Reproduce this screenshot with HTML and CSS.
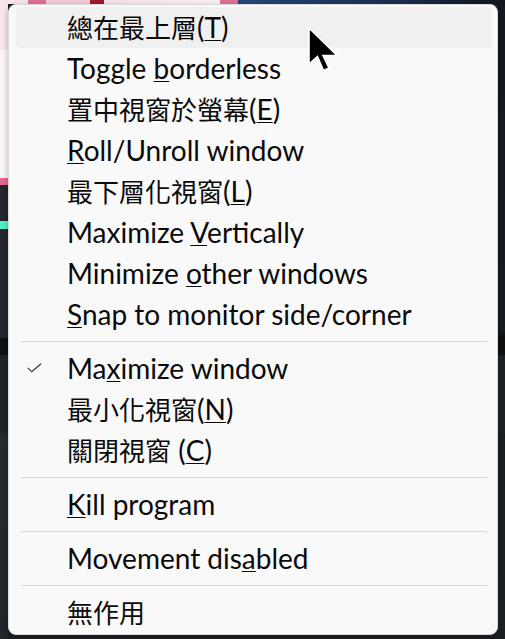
FILE: index.html
```html
<!DOCTYPE html>
<html lang="zh-Hant">
<head>
<meta charset="utf-8">
<title>Window menu</title>
<link rel="stylesheet" href="styles.css">
</head>
<body>
<div class="menu">
  <div class="item hover"><span class="label"><span class="cjk">總在最上層</span>(<u>T</u>)</span></div>
  <div class="item"><span class="label">Toggle <u>b</u>orderless</span></div>
  <div class="item"><span class="label"><span class="cjk">置中視窗於螢幕</span>(<u>E</u>)</span></div>
  <div class="item"><span class="label"><u>R</u>oll/Unroll window</span></div>
  <div class="item"><span class="label"><span class="cjk">最下層化視窗</span>(<u>L</u>)</span></div>
  <div class="item"><span class="label">Maximize <u>V</u>ertically</span></div>
  <div class="item"><span class="label">Minimize <u>o</u>ther windows</span></div>
  <div class="item"><span class="label"><u>S</u>nap to monitor side/corner</span></div>
  <div class="sep"></div>
  <div class="item">
    <svg class="check" width="15" height="10" viewBox="0 0 15 10"><polyline points="0.8,4.8 4.8,8.8 14,0.8" fill="none" stroke="#333" stroke-width="1.2"/></svg>
    <span class="label">Ma<u>x</u>imize window</span>
  </div>
  <div class="item"><span class="label"><span class="cjk">最小化視窗</span>(<u>N</u>)</span></div>
  <div class="item"><span class="label"><span class="cjk">關閉視窗</span> (<u>C</u>)</span></div>
  <div class="sep"></div>
  <div class="item"><span class="label"><u>K</u>ill program</span></div>
  <div class="sep"></div>
  <div class="item"><span class="label">Movement dis<u>a</u>bled</span></div>
  <div class="sep"></div>
  <div class="item"><span class="label"><span class="cjk">無作用</span></span></div>
</div>
<svg class="cursor" width="32" height="46" viewBox="0 0 32 46">
  <polygon points="1,1 1,37 9.5,29.5 15.5,43.5 21,41 15,28.5 29,28.5" fill="#000" stroke="#fff" stroke-width="1.6" stroke-linejoin="miter"/>
</svg>
</body>
</html>
```

FILE: styles.css
```css
html, body {
  margin: 0;
  padding: 0;
}
body {
  width: 505px;
  height: 639px;
  overflow: hidden;
  position: relative;
  font-family: Lato, "Noto Sans CJK TC", sans-serif;
  background:
    linear-gradient(to right,
      #f7e6ec 0, #f7e6ec 28px,
      #e07094 28px, #e07094 46px,
      #f3cbd8 46px, #f3cbd8 90px,
      #9b1b33 90px, #9b1b33 104px,
      #fae2ea 104px, #fdf2f5 220px,
      #e07094 220px, #e07094 238px,
      #27477a 238px, #1a2d4c 400px, #0f161e 505px) top left / 100% 4px no-repeat,
    linear-gradient(to bottom,
      #f8e6ec 0, #f8e6ec 50px,
      #fcf6f7 50px, #fcf6f7 178px,
      #e06a90 178px, #e06a90 185px,
      #22272d 185px, #22272d 221px,
      #4ef0c4 221px, #4ef0c4 229px,
      #22272d 229px, #22272d 338px,
      #0e1113 338px, #0e1113 355px,
      #1f2328 355px, #1f2328 433px,
      #272b30 433px, #22262b 639px) top left / 8px 100% no-repeat,
    linear-gradient(to bottom,
      #121922 0, #161c22 330px,
      #0e1113 337px, #0e1113 355px,
      #1e2328 355px, #1e2328 433px,
      #1a1f23 433px, #1b2226 639px) top right / 8px 100% no-repeat,
    #1c2024;
}
.menu {
  box-sizing: border-box;
  margin: 4px 0 0 8px;
  width: 490px;
  height: 631px;
  padding: 2px 5px 1px 7px;
  background: #f9f9f9;
  border: 1px solid #d9d9d9;
  border-radius: 8px;
  box-shadow: 0 2px 6px rgba(0, 0, 0, 0.28);
  display: flex;
  flex-direction: column;
}
.item {
  box-sizing: border-box;
  position: relative;
  height: 41px;
  flex: none;
  display: flex;
  align-items: flex-start;
  padding: 2px 0 0 51px;
  border-radius: 4px;
  color: #0a0a0a;
  font-size: 28px;
  line-height: 37px;
}
.item.hover {
  background: #f0f0f0;
}
.label {
  white-space: nowrap;
}
.cjk {
  font-family: "Noto Sans CJK TC", sans-serif;
  font-size: 26px;
  line-height: 1;
}
u {
  text-decoration: underline;
  text-decoration-thickness: 1px;
  text-underline-offset: 2px;
}
.check {
  position: absolute;
  left: 11px;
  top: 15px;
}
.sep {
  flex: none;
  height: 13px;
  display: flex;
  align-items: center;
  padding: 0 5px;
}
.sep::after {
  content: "";
  display: block;
  width: 100%;
  height: 1px;
  background: #d6d6d6;
}
.cursor {
  position: absolute;
  left: 308px;
  top: 27px;
}
```
